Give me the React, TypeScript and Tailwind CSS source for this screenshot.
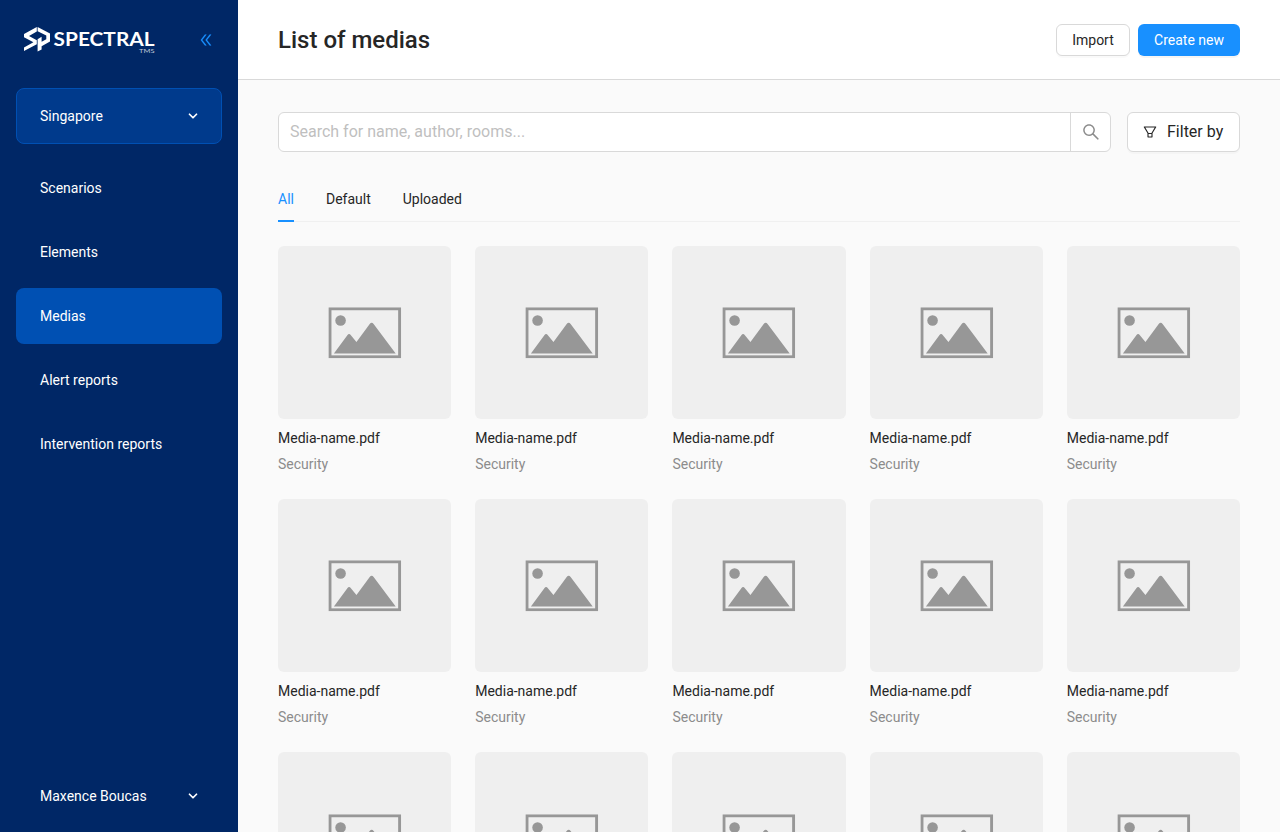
import React from "react";
import { AiOutlineDoubleLeft, AiOutlineFilter, AiOutlineSearch } from "react-icons/ai";
import { FiChevronDown } from "react-icons/fi";

const menuItems = [
  "Scenarios",
  "Elements",
  "Medias",
  "Alert reports",
  "Intervention reports",
];

const tabs = ["All", "Default", "Uploaded"];

const medias = Array.from({ length: 15 }, (_, id) => ({
  id,
  name: "Media-name.pdf",
  category: "Security",
}));

const Logo = () => (
  <svg width="132" height="30" viewBox="0 0 132 30" fill="white">
    <path d="M12.8 2L0 9v3.2l9.4 5L0 22.4V26l12.8-6.7v-4L5 11l7.8-4.5z" />
    <path d="M13.6 2L26 8.6v8l-8.4 4.6v3.4l-4 2V14.2l4-2.4v5l4.7-2.6v-3.6l-8.7-4.4z" />
    <text
      x="29.6"
      y="20.6"
      fontFamily="Lato, sans-serif"
      fontWeight="700"
      fontSize="19.5"
      textLength="101"
      lengthAdjust="spacingAndGlyphs"
    >
      SPECTRAL
    </text>
    <text
      x="115"
      y="27.8"
      fontFamily="Lato, sans-serif"
      fontSize="6.5"
      textLength="15.5"
      lengthAdjust="spacingAndGlyphs"
      fillOpacity="0.75"
    >
      TMS
    </text>
  </svg>
);

const ImagePlaceholder = () => (
  <svg width="73" height="51" viewBox="0 0 74 52" fill="#979797" className="translate-x-[0.3px] translate-y-[0.3px]">
    <rect x="1.5" y="1.5" width="71" height="49" fill="none" stroke="#979797" strokeWidth="3" />
    <circle cx="12.3" cy="13.4" r="5.4" />
    <path d="M5.5 47L19.2 28.4Q21 26 22.8 28.4L28.5 35.4L42 17Q44 14.4 46 17L68.5 47z" />
  </svg>
);

const Sidebar = () => (
  <aside className="w-[238px] shrink-0 h-full bg-[#002766] text-white text-sm flex flex-col px-4">
    <div className="h-20 flex items-center justify-between px-2">
      <Logo />
      <AiOutlineDoubleLeft className="text-[#1890ff]" size={16} strokeWidth={10} />
    </div>
    <button className="mt-2 h-14 pl-[23px] pr-[21px] flex items-center justify-between rounded-lg border border-[#0050b3] bg-[#003a8c]">
      Singapore
      <FiChevronDown size={14} strokeWidth={3} />
    </button>
    <nav className="mt-4 flex flex-col gap-2">
      {menuItems.map((item) => (
        <a
          key={item}
          className={`h-14 px-6 flex items-center rounded-lg ${
            item === "Medias" ? "bg-[#0050b3]" : ""
          }`}
        >
          {item}
        </a>
      ))}
    </nav>
    <button className="mt-auto mb-2 h-14 pl-6 pr-[22px] flex items-center justify-between">
      Maxence Boucas
      <FiChevronDown size={14} strokeWidth={3} />
    </button>
  </aside>
);

const Header = () => (
  <header className="h-20 px-10 flex items-center justify-between bg-white border-b border-[#d9d9d9]">
    <h1 className="text-2xl font-medium">List of medias</h1>
    <div className="flex gap-2 text-sm">
      <button className="h-8 w-[74px] rounded-md border border-[#d9d9d9] bg-white shadow-[0_2px_0_rgba(0,0,0,0.02)]">
        Import
      </button>
      <button className="h-8 w-[102px] rounded-md bg-[#1890ff] text-white shadow-[0_2px_0_rgba(0,0,0,0.04)]">
        Create new
      </button>
    </div>
  </header>
);

const SearchBar = () => (
  <div className="flex gap-4">
    <div className="h-10 flex-1 flex rounded-md border border-[#d9d9d9] bg-white overflow-hidden">
      <input
        className="flex-1 px-[11px] text-base outline-none placeholder:text-[#bfbfbf]"
        placeholder="Search for name, author, rooms..."
      />
      <button className="w-10 flex items-center justify-center border-l border-[#d9d9d9] text-[#8c8c8c]">
        <AiOutlineSearch size={20} />
      </button>
    </div>
    <button className="h-10 w-[113px] pl-[14px] flex items-center gap-[9px] rounded-md border border-[#d9d9d9] bg-white text-base shadow-[0_2px_0_rgba(0,0,0,0.02)]">
      <AiOutlineFilter size={16} />
      Filter by
    </button>
  </div>
);

const Tabs = () => (
  <div className="mt-6 h-[46px] flex gap-8 border-b border-[#f0f0f0] text-sm">
    {tabs.map((tab) => (
      <button
        key={tab}
        className={`h-[46px] pt-0.5 border-b-2 ${
          tab === "All" ? "border-[#1890ff] text-[#1890ff]" : "border-transparent"
        }`}
      >
        {tab}
      </button>
    ))}
  </div>
);

export default function App() {
  return (
    <div className="h-screen flex overflow-hidden bg-[#fafafa] font-[Roboto,sans-serif] text-[#262626]">
      <Sidebar />
      <div className="flex-1 flex flex-col min-w-0">
        <Header />
        <main className="flex-1 min-h-0 overflow-hidden px-10 pt-8">
          <SearchBar />
          <Tabs />
          <div className="mt-6 grid grid-cols-5 gap-6 text-sm leading-[22px]">
            {medias.map((media) => (
              <div key={media.id}>
                <div className="aspect-square rounded-md bg-[#efefef] flex items-center justify-center">
                  <ImagePlaceholder />
                </div>
                <p className="mt-2">{media.name}</p>
                <p className="mt-1 text-[#8c8c8c]">{media.category}</p>
              </div>
            ))}
          </div>
        </main>
      </div>
    </div>
  );
}
